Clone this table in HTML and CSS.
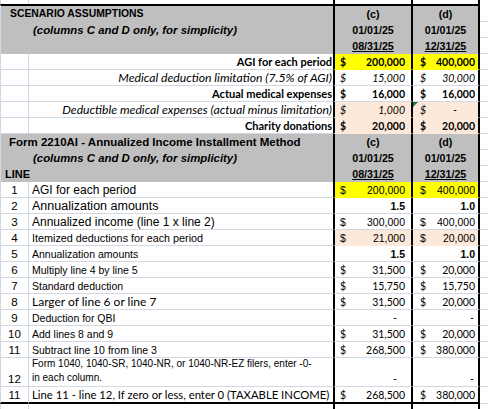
FILE: index.html
```html
<!DOCTYPE html>
<html lang="en">
<head>
  <meta charset="UTF-8">
  <meta name="viewport" content="width=device-width, initial-scale=1.0">
  <title>Form 2210AI worksheet</title>

  <link rel="stylesheet" href="styles.css">

</head>
<body>
  <div class="sheet">
    <div class="row edge">
      <div class="a"></div><div class="b"></div><div class="c"></div><div class="d"></div><div class="e"></div>
    </div>

    <!-- scenario block -->
    <div class="row head top">
      <div class="ab">
        <div class="ln title1">SCENARIO ASSUMPTIONS</div>
        <div class="ln sub">(columns C and D only, for simplicity)</div>
        <div class="ln"></div>
      </div>
      <div class="c hd">
        <div class="ln">(c)</div>
        <div class="ln">01/01/25</div>
        <div class="ln"><u>08/31/25</u></div>
      </div>
      <div class="d hd">
        <div class="ln">(d)</div>
        <div class="ln">01/01/25</div>
        <div class="ln"><u>12/31/25</u></div>
      </div>
      <div class="e"><div class="ln"></div><div class="ln"></div><div class="ln"></div></div>
    </div>

    <div class="row cal">
      <div class="a"></div>
      <div class="b lab bold">AGI for each period</div>
      <div class="c money bold yel"><span>$</span><span>200,000</span></div>
      <div class="d money bold yel"><span>$</span><span>400,000</span></div>
      <div class="e"></div>
    </div>
    <div class="row cal">
      <div class="a"></div>
      <div class="b lab it">Medical deduction limitation (7.5% of AGI)</div>
      <div class="c money it"><span>$</span><span>15,000</span></div>
      <div class="d money it"><span>$</span><span>30,000</span></div>
      <div class="e"></div>
    </div>
    <div class="row cal">
      <div class="a"></div>
      <div class="b lab bold">Actual medical expenses</div>
      <div class="c money bold"><span>$</span><span>16,000</span></div>
      <div class="d money bold"><span>$</span><span>16,000</span></div>
      <div class="e"></div>
    </div>
    <div class="row cal">
      <div class="a"></div>
      <div class="b lab it">Deductible medical expenses (actual minus limitation)</div>
      <div class="c money it pch"><span>$</span><span>1,000</span></div>
      <div class="d money it pch flag"><span>$</span><span class="nil wide">-</span></div>
      <div class="e"></div>
    </div>
    <div class="row cal">
      <div class="a"></div>
      <div class="b lab bold">Charity donations</div>
      <div class="c money bold pch"><span>$</span><span>20,000</span></div>
      <div class="d money bold pch"><span>$</span><span>20,000</span></div>
      <div class="e"></div>
    </div>

    <!-- form 2210AI block -->
    <div class="row head">
      <div class="ab">
        <div class="ln title2">Form 2210AI - Annualized Income Installment Method</div>
        <div class="ln sub">(columns C and D only, for simplicity)</div>
        <div class="ln line-hd">LINE</div>
      </div>
      <div class="c hd">
        <div class="ln">(c)</div>
        <div class="ln">01/01/25</div>
        <div class="ln"><u>08/31/25</u></div>
      </div>
      <div class="d hd">
        <div class="ln">(d)</div>
        <div class="ln">01/01/25</div>
        <div class="ln"><u>12/31/25</u></div>
      </div>
      <div class="e"><div class="ln"></div><div class="ln"></div><div class="ln"></div></div>
    </div>

    <div class="row ar">
      <div class="a">1</div>
      <div class="b f12">AGI for each period</div>
      <div class="c money yel"><span>$</span><span>200,000</span></div>
      <div class="d money yel"><span>$</span><span>400,000</span></div>
      <div class="e"></div>
    </div>
    <div class="row ar">
      <div class="a">2</div>
      <div class="b f125">Annualization amounts</div>
      <div class="c num bold">1.5</div>
      <div class="d num bold">1.0</div>
      <div class="e"></div>
    </div>
    <div class="row ar">
      <div class="a">3</div>
      <div class="b f12">Annualized income (line 1 x line 2)</div>
      <div class="c money"><span>$</span><span>300,000</span></div>
      <div class="d money"><span>$</span><span>400,000</span></div>
      <div class="e"></div>
    </div>
    <div class="row ar">
      <div class="a">4</div>
      <div class="b f108">Itemized deductions for each period</div>
      <div class="c money pch"><span>$</span><span>21,000</span></div>
      <div class="d money pch"><span>$</span><span>20,000</span></div>
      <div class="e"></div>
    </div>
    <div class="row ar">
      <div class="a">5</div>
      <div class="b f105">Annualization amounts</div>
      <div class="c num bold">1.5</div>
      <div class="d num bold">1.0</div>
      <div class="e"></div>
    </div>
    <div class="row cal">
      <div class="a ar">6</div>
      <div class="b ar f105">Multiply line 4 by line 5</div>
      <div class="c money"><span>$</span><span>31,500</span></div>
      <div class="d money"><span>$</span><span>20,000</span></div>
      <div class="e"></div>
    </div>
    <div class="row cal">
      <div class="a ar">7</div>
      <div class="b ar f105">Standard deduction</div>
      <div class="c money"><span>$</span><span>15,750</span></div>
      <div class="d money"><span>$</span><span>15,750</span></div>
      <div class="e"></div>
    </div>
    <div class="row cal">
      <div class="a ar">8</div>
      <div class="b f12">Larger of line 6 or line 7</div>
      <div class="c money"><span>$</span><span>31,500</span></div>
      <div class="d money"><span>$</span><span>20,000</span></div>
      <div class="e"></div>
    </div>
    <div class="row cal">
      <div class="a ar">9</div>
      <div class="b ar f105">Deduction for QBI</div>
      <div class="c num"><span class="nil">-</span></div>
      <div class="d num"><span class="nil">-</span></div>
      <div class="e"></div>
    </div>
    <div class="row cal">
      <div class="a ar">10</div>
      <div class="b ar f105">Add lines 8 and 9</div>
      <div class="c money"><span>$</span><span>31,500</span></div>
      <div class="d money"><span>$</span><span>20,000</span></div>
      <div class="e"></div>
    </div>
    <div class="row cal">
      <div class="a ar">11</div>
      <div class="b ar f105">Subtract line 10 from line 3</div>
      <div class="c money"><span>$</span><span>268,500</span></div>
      <div class="d money"><span>$</span><span>380,000</span></div>
      <div class="e"></div>
    </div>
    <div class="row cal tall">
      <div class="a ar">12</div>
      <div class="b ar f10 two">
        <div>Form 1040, 1040-SR, 1040-NR, or 1040-NR-EZ filers, enter -0-</div>
        <div>in each column.</div>
      </div>
      <div class="c num"><span class="nil">-</span></div>
      <div class="d num"><span class="nil">-</span></div>
      <div class="e"></div>
    </div>
    <div class="row cal last">
      <div class="a ar">11</div>
      <div class="b f113">Line 11 - line 12, If zero or less, enter 0 (TAXABLE INCOME)</div>
      <div class="c money"><span>$</span><span>268,500</span></div>
      <div class="d money"><span>$</span><span>380,000</span></div>
      <div class="e"></div>
    </div>

    <div class="row edge low">
      <div class="a"></div><div class="b"></div><div class="c"></div><div class="d"></div><div class="e"></div>
    </div>
  </div>
</body>
</html>
```

FILE: styles.css
```css
* {
    box-sizing: border-box;
}

body {
    margin: 0;
    background-color: white;
    color: black;
    font-family: "Liberation Sans", Arial, sans-serif;
    font-size: 11px;
}

.sheet {
    width: 488px;
}

/* every row shares the same column grid */
.row {
    display: grid;
    grid-template-columns: 29px 304px 80px 67px 8px;
    height: 16px;
}

.row > div {
    display: flex;
    align-items: center;
    border-bottom: 1px solid #d0d7e5;
    white-space: nowrap;
    overflow: hidden;
}

.a {
    justify-content: center;
    border-left: 1px solid #d0d7e5;
    border-right: 1px solid #d0d7e5;
    font-size: 11.5px;
}

.b {
    padding-left: 3px;
}

.c {
    border-left: 2px solid black;
    border-right: 2px solid black;
    padding: 0 6px 0 5px;
}

.d {
    border-right: 2px solid black;
    padding: 0 3px 0 7px;
}

.cal {
    font-family: Lato, "Liberation Sans", sans-serif;
    font-size: 11px;
}

.ar {
    font-family: "Liberation Sans", Arial, sans-serif;
}

.row.ar .c,
.row.ar .d {
    font-size: 10.5px;
}

.cal .c,
.cal .d {
    font-size: 10.5px;
}

.bold {
    font-weight: bold;
}

.it {
    font-style: italic;
}

.lab.it {
    font-size: 12.2px;
}

.money {
    justify-content: space-between;
}

.num {
    justify-content: flex-end;
}

.c .nil {
    margin-right: 8px;
}

.d .nil {
    margin-right: 1px;
}

.d .nil.wide {
    margin-right: 18px;
}

.lab {
    justify-content: flex-end;
    padding-right: 1px;
}

.row > .yel {
    background-color: #ffff00;
    border-bottom-color: #ffff00;
}

.row > .pch {
    background-color: #fde9d9;
    border-bottom-color: #fde9d9;
}

/* excel's little error marker */
.flag {
    position: relative;
}

.flag::before {
    content: "";
    position: absolute;
    left: 0;
    top: 0;
    border-top: 5px solid #1e7b34;
    border-right: 5px solid transparent;
}

/* grey header blocks */
.head {
    height: 48px;
}

.head.top {
    height: 50px;
}

.head > div {
    display: block;
    background-color: #bfbfbf;
}

.row.head > div {
    border-bottom: none;
}

.head.top > div {
    border-top: 2px solid black;
}

.head.top > .e {
    border-top: none;
    padding-top: 2px;
}

.head > .e {
    background-color: white;
}

.head .e .ln {
    border-bottom: 1px solid #d0d7e5;
}

.ab {
    grid-column: span 2;
    border-left: 1px solid #d0d7e5;
    font-weight: bold;
}

.ln {
    height: 16px;
    line-height: 16px;
}

.title1 {
    padding-left: 9px;
    font-size: 10.4px;
}

.title2 {
    padding-left: 8px;
    font-size: 11.5px;
}

.sub {
    padding-left: 32px;
    font-size: 11.4px;
    font-style: italic;
}

.line-hd {
    padding-left: 4px;
    font-size: 11px;
}

.hd {
    text-align: center;
    font-weight: bold;
    font-size: 10.7px;
}

.row > .hd {
    padding: 0;
}

.f12 {
    font-size: 12px;
}

.f125 {
    font-size: 12.5px;
}

.f113 {
    font-size: 11.3px;
}

.f108 {
    font-size: 10.8px;
}

.f105 {
    font-size: 10.5px;
}

.f10 {
    font-size: 10px;
}

/* row 12 wraps onto two lines */
.tall {
    height: 29px;
}

.tall > div {
    align-items: flex-end;
    padding-bottom: 1px;
}

.two {
    flex-direction: column;
    align-items: flex-start !important;
    justify-content: flex-end;
    line-height: 14px;
}

.last {
    height: 17px;
}

.row.last > div {
    border-bottom: 2px solid black;
}

.row.last > .e {
    border-bottom: 1px solid #d0d7e5;
}

.edge {
    height: 4px;
}

.edge.low {
    height: 5px;
}

.row.edge > div {
    border-bottom: none;
}
```
